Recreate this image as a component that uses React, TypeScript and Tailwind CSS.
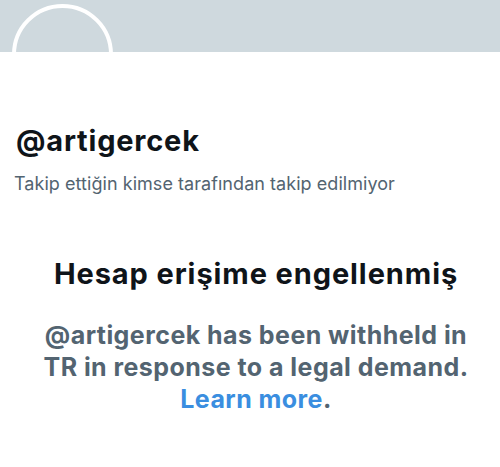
export default function App() {
  return (
    <div className="relative h-[467px] w-[500px] overflow-hidden bg-white font-['Inter',sans-serif]">
      {/* header banner */}
      <div className="h-[52px] bg-[#cfd9de]" />
      {/* avatar ring peeking over the banner */}
      <div className="absolute left-[12px] top-[4px] h-[101px] w-[101px] rounded-full border-[4px] border-white bg-[#cfd9de]" />
      <div className="absolute left-0 top-[52px] h-[60px] w-full bg-white" />

      <div className="relative px-4 pt-[72px]">
        <h1 className="text-[29px] font-bold leading-[34px] tracking-[0.8px] text-[#0f1419]">@artigercek</h1>
        <p className="-ml-0.5 mt-4 text-[18px] leading-[20px] tracking-[0.05px] text-[#536471]">
          Takip ettiğin kimse tarafından takip edilmiyor
        </p>
      </div>

      <div className="relative mt-16 flex flex-col items-center pl-3 text-center">
        <h2 className="text-[29px] font-bold leading-[32px] tracking-[0.9px] text-[#0f1419]">Hesap erişime engellenmiş</h2>
        <p className="mt-[29px] text-[25px] font-bold leading-[32px] tracking-[0.45px] text-[#536471]">
          @artigercek has been withheld in
          <br />
          TR in response to a legal demand.
          <br />
          <a href="#" className="text-[#3a8ee0]">
            Learn more
          </a>
          .
        </p>
      </div>
    </div>
  );
}
